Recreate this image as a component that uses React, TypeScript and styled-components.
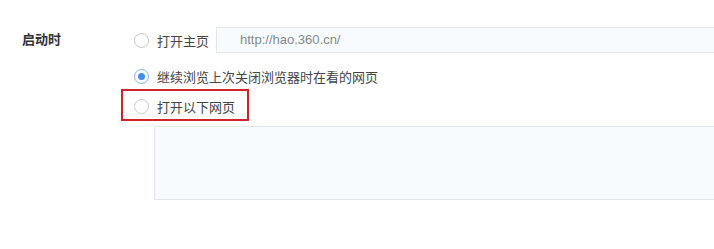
import { createGlobalStyle } from 'styled-components';
import styled from 'styled-components';

const GlobalStyle = createGlobalStyle`
	html, body {
		margin: 0;
		padding: 0;
		background: #fff;
		overflow: hidden;
	}
	body {
		font-family: 'Liberation Sans', 'Noto Sans CJK SC', sans-serif;
		font-size: 13px;
		color: #333;
	}
`;

const StyledSetting = styled.div`
	display: grid;
	grid-template-columns: 111px 1fr;
	padding: 27px 0 0 22px;
`;

const StyledLabel = styled.div`
	height: 26px;
	line-height: 26px;
	font-weight: bold;
	color: #333;
`;

const StyledOptions = styled.div`
	display: flex;
	flex-direction: column;
`;

const StyledRow = styled.label<{ $height: number }>`
	display: flex;
	align-items: center;
	height: ${({ $height }) => $height}px;
	color: #444;
	cursor: pointer;
`;

const StyledRadio = styled.span<{ $checked?: boolean }>`
	box-sizing: border-box;
	width: 15px;
	height: 15px;
	margin: 0 8px 0 1px;
	border-radius: 50%;
	border: 1px solid ${({ $checked }) => ($checked ? '#7fb2ec' : '#c9c9c9')};
	background: #fff;
	display: flex;
	align-items: center;
	justify-content: center;
	flex-shrink: 0;

	&::after {
		content: '';
		display: ${({ $checked }) => ($checked ? 'block' : 'none')};
		width: 7px;
		height: 7px;
		border-radius: 50%;
		background: #3f8fe9;
	}
`;

const StyledInput = styled.div`
	box-sizing: border-box;
	flex: 1;
	height: 26px;
	margin-left: 7px;
	padding-left: 23px;
	line-height: 24px;
	border: 1px solid #e4e8ec;
	border-right: none;
	background: #f7fbfe;
	color: #888;
`;

const StyledHighlight = styled.div`
	box-sizing: border-box;
	width: 128px;
	height: 32px;
	margin: 3px 0 0 -12px;
	padding: 2px 0 0 10px;
	border: 2px solid #d0222c;
	display: flex;
	align-items: center;
`;

const StyledPageList = styled.div`
	box-sizing: border-box;
	height: 74px;
	margin: 5px 0 0 21px;
	border: 1px solid #e4e8ec;
	border-right: none;
	background: #f7fbfe;
`;

type Option = {
	text: string;
	checked?: boolean;
};

const homeOption: Option = { text: '打开主页' };
const continueOption: Option = {
	text: '继续浏览上次关闭浏览器时在看的网页',
	checked: true,
};
const pagesOption: Option = { text: '打开以下网页' };

const App = () => {
	return (
		<>
			<GlobalStyle />
			<StyledSetting>
				<StyledLabel>启动时</StyledLabel>
				<StyledOptions>
					<StyledRow $height={26}>
						<StyledRadio $checked={homeOption.checked} />
						{homeOption.text}
						<StyledInput>http://hao.360.cn/</StyledInput>
					</StyledRow>
					<StyledRow $height={20} style={{ marginTop: 13 }}>
						<StyledRadio $checked={continueOption.checked} />
						{continueOption.text}
					</StyledRow>
					<StyledHighlight>
						<StyledRow $height={26}>
							<StyledRadio $checked={pagesOption.checked} />
							{pagesOption.text}
						</StyledRow>
					</StyledHighlight>
					<StyledPageList />
				</StyledOptions>
			</StyledSetting>
		</>
	);
};

export default App;
